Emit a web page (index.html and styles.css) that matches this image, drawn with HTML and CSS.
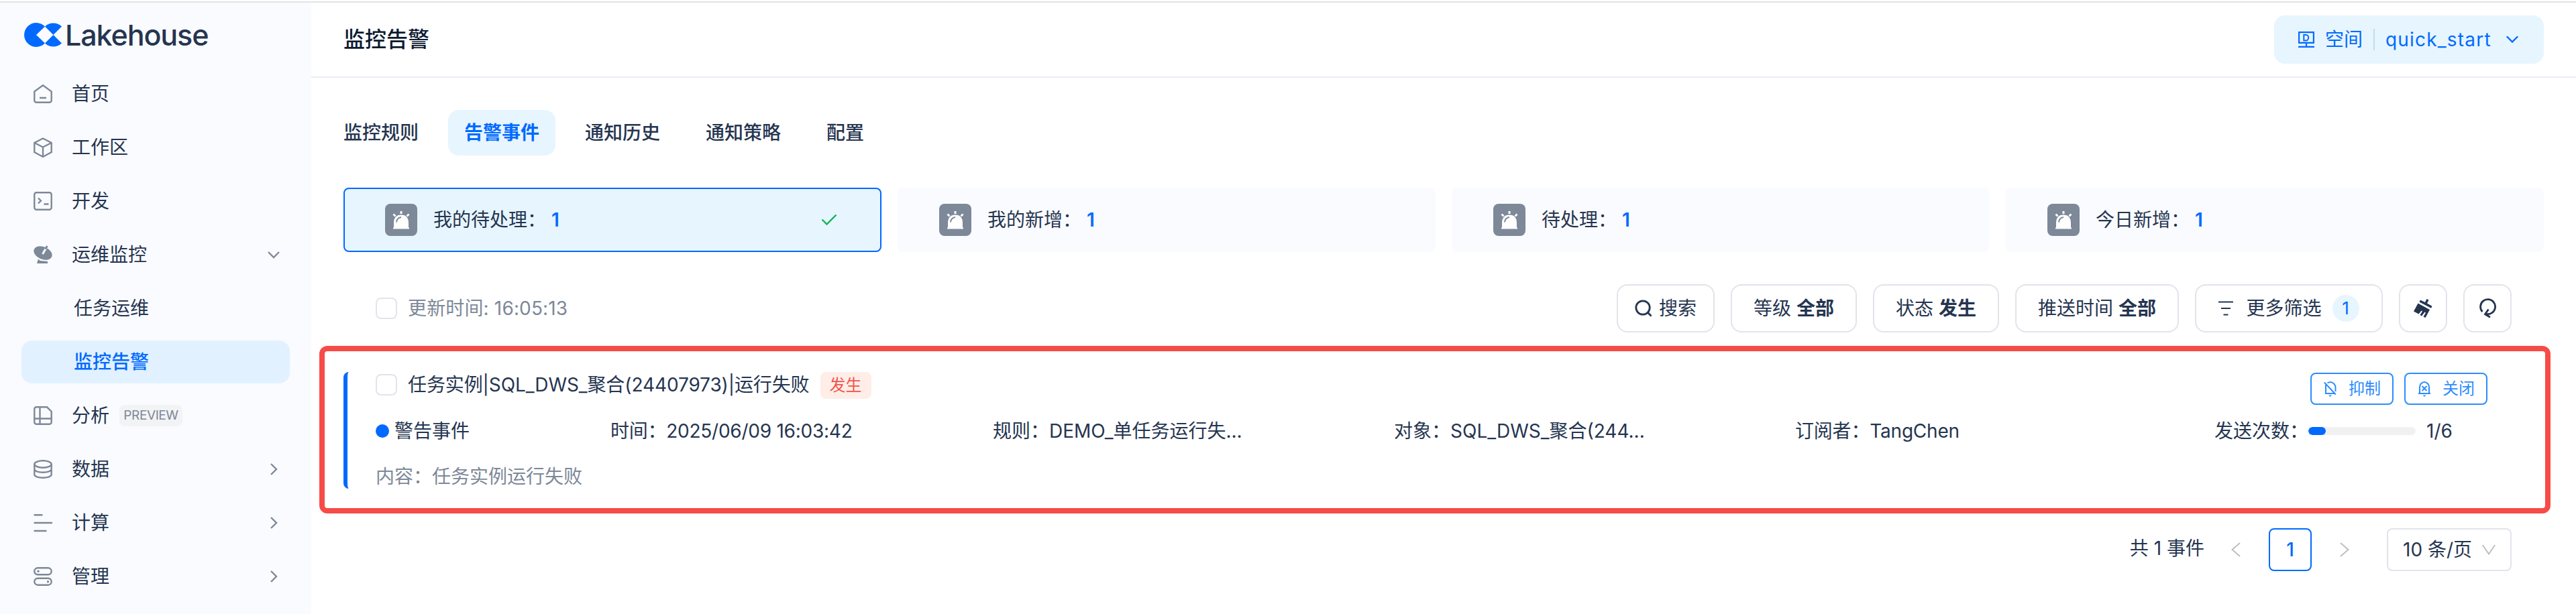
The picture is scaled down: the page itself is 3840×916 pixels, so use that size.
FILE: index.html
```html
<!DOCTYPE html>
<html lang="zh-CN">
<head>
<meta charset="utf-8">
<title>监控告警</title>
<link rel="stylesheet" href="styles.css">
</head>
<body>
<svg class="defs" width="0" height="0">
  <defs>
    <symbol id="siren" viewBox="0 0 48 48">
      <path fill="#fff" d="M13 35.500V29q0-12.500 11-12.500T35 29v6.500h1V38H12v-2.500z"/>
      <path fill="#fff" d="M22.500 11h3v4h-3zM11.500 16.500l2-2 3 3-2 2zM36.500 16.500l-2-2-3 3 2 2z"/>
      <path fill="none" stroke="#7d8898" stroke-width="2" d="M17 27.500q.500-6.500 7-7.500"/>
      <path stroke="#7d8898" stroke-opacity=".5" stroke-width="1" d="M12 37.500h24"/>
    </symbol>
    <symbol id="right" viewBox="0 0 20 20"><path fill="none" stroke="#7d8898" stroke-width="2.400" d="M6 2l8 8-8 8"/></symbol>
  </defs>
</svg>
<div class="app">
  <aside class="sidebar">
    <div class="logo">
      <svg width="56" height="36" viewBox="0 0 56 36" fill="#006aff"><path d="M31 5.500A18 18 0 1 0 31 30.500L18 18z"/><path d="M31 5.500A18 18 0 0 1 56 5.500L43.500 18zM31 30.500A18 18 0 0 0 56 30.500L43.500 18z"/></svg>
      <span class="brand">Lakehouse</span>
    </div>
    <nav class="menu">
      <a class="item"><svg class="mi" viewBox="0 0 28 28"><path d="M1.300 10.500L14 1.300l12.700 9.200V24a2.700 2.700 0 0 1-2.700 2.700H4A2.700 2.700 0 0 1 1.300 24zM9 20h10"/></svg><span>首页</span></a>
      <a class="item"><svg class="mi" viewBox="0 0 28 28"><path d="M14 0.500L26.700 7v14L14 28 1.300 21V7zM1.300 7L14 13.500 26.700 7M14 13.500V28"/></svg><span>工作区</span></a>
      <a class="item"><svg class="mi" viewBox="0 0 28 28"><rect x="1.300" y="1.300" width="25.400" height="25.400" rx="3"/><path d="M7 9.500l4 4-4 4M15.500 18.500h7"/></svg><span>开发</span></a>
      <a class="item"><svg class="mi solid" viewBox="0 0 28 28"><ellipse cx="14" cy="11.500" rx="14.300" ry="9.300" transform="rotate(24 14 11.500)"/><path d="M7 20.500l3 2.500 11 1v3H5z"/><path class="cut" d="M13.500 13L18.500 4.500"/><path class="rod" d="M17.500 5.500L20.500 1"/></svg><span>运维监控</span><svg class="arrow" viewBox="0 0 20 20"><path fill="none" stroke="#7d8898" stroke-width="2.400" d="M2 6l8 8 8-8"/></svg></a>
      <a class="item sub"><span>任务运维</span></a>
      <a class="item sub active"><span>监控告警</span></a>
      <a class="item"><svg class="mi" viewBox="0 0 28 28"><path d="M4 1.300h16l6.700 6.700v16a2.700 2.700 0 0 1-2.700 2.700H4A2.700 2.700 0 0 1 1.300 24V4A2.700 2.700 0 0 1 4 1.300zM9.500 1.300v25.400M1.300 18.500h25.400"/></svg><span>分析</span><em class="preview">PREVIEW</em></a>
      <a class="item"><svg class="mi" viewBox="0 0 28 28"><ellipse cx="14" cy="6.500" rx="12.700" ry="5.200"/><path d="M1.300 6.500V22c0 2.500 5.500 4.700 12.700 4.700S26.700 24.500 26.700 22V6.500M1.300 14c0 2.500 5.500 4.700 12.700 4.700S26.700 16.500 26.700 14"/></svg><span>数据</span><svg class="arrow"><use href="#right"/></svg></a>
      <a class="item"><svg class="mi" viewBox="0 0 28 28"><path stroke-linecap="round" d="M1.500 2.300h11M1.500 14H27M1.500 26h17"/></svg><span>计算</span><svg class="arrow"><use href="#right"/></svg></a>
      <a class="item"><svg class="mi" viewBox="0 0 28 28"><rect x="1.300" y="1.300" width="25.400" height="10" rx="5"/><rect x="1.300" y="16.700" width="25.400" height="10" rx="5"/><circle class="dotfill" cx="7" cy="6.300" r="1.700"/><circle class="dotfill" cx="21.500" cy="21.700" r="1.700"/></svg><span>管理</span><svg class="arrow"><use href="#right"/></svg></a>
    </nav>
  </aside>

  <main class="main">
    <header class="header">
      <h1>监控告警</h1>
      <div class="space">
        <svg width="24" height="24" viewBox="0 0 24 24" fill="none" stroke="#006aff"><path stroke-width="2.200" d="M1.100 1.100h21.800v15.800H1.100zM0 22.800h24M12 17v5"/><path stroke-width="2" d="M8.300 5h3.200a3.500 4 0 0 1 0 8.500H8.300z"/></svg>
        <span class="space-label">空间</span><i class="divider"></i><span class="space-name">quick_start</span>
        <svg class="space-arrow" width="18" height="10" viewBox="0 0 18 10"><path fill="none" stroke="#006aff" stroke-width="2.400" stroke-linecap="round" d="M1.500 1l7.500 7.500L16.500 1"/></svg>
      </div>
    </header>

    <div class="content">
      <nav class="tabs"><a>监控规则</a><a class="on">告警事件</a><a>通知历史</a><a>通知策略</a><a>配置</a></nav>

      <section class="cards">
        <div class="card selected"><svg class="badge-icon"><use href="#siren"/></svg><span>我的待处理：</span><b>1</b><svg class="tick" width="24" height="18" viewBox="0 0 24 18"><path fill="none" stroke="#12b253" stroke-width="2.400" d="M1.500 8.500l7 7L22.500 1.500"/></svg></div>
        <div class="card"><svg class="badge-icon"><use href="#siren"/></svg><span>我的新增：</span><b>1</b></div>
        <div class="card"><svg class="badge-icon"><use href="#siren"/></svg><span>待处理：</span><b>1</b></div>
        <div class="card"><svg class="badge-icon"><use href="#siren"/></svg><span>今日新增：</span><b>1</b></div>
      </section>

      <section class="toolbar">
        <i class="check"></i><span class="updated">更新时间: 16:05:13</span>
        <div class="filters">
          <button class="btn search"><svg width="26" height="26" viewBox="0 0 26 26" fill="none" stroke="#253550" stroke-width="2.800"><circle cx="12" cy="12" r="10.200"/><path d="M19 19l5.500 5.500"/></svg>搜索</button>
          <button class="btn level">等级 <b>全部</b></button>
          <button class="btn level">状态 <b>发生</b></button>
          <button class="btn push">推送时间 <b>全部</b></button>
          <button class="btn more"><svg width="22" height="22" viewBox="0 0 22 22" stroke="#253550" stroke-width="2.200"><path d="M0 1.500h22M4 11h14M7.500 20.500h7"/></svg><span>更多筛选</span><em>1</em></button>
          <button class="btn square"><svg width="28" height="30" viewBox="0 0 28 30"><path fill="#253550" d="M19.500 1l3 1.500-2.500 5 7.500 4.300-1.500 3L8.500 5.500l1.500-3 7 3.500z"/><path fill="#253550" d="M6.500 7.500L24 17l-6.500 12-3-1.500 3.500-6-1.500-1-4.500 6-2.500-1.500 3.500-5.500-1.500-1-4 5L0 19.500z"/></svg></button>
          <button class="btn square"><svg width="26" height="30" viewBox="0 0 26 30" fill="none" stroke="#253550" stroke-width="2.800"><path d="M5.500 20A11 11 0 1 1 20 21.500Q16 24.500 10 23.500"/><path d="M14.500 16.500L9.500 23.800l7.500 4.400"/></svg></button>
        </div>
      </section>

      <section class="highlight">
        <article class="event">
          <div class="event-head">
            <i class="check"></i><span class="event-title">任务实例|SQL_DWS_聚合(24407973)|运行失败</span><em class="tag">发生</em>
            <div class="actions">
              <button class="act"><svg width="20" height="24" viewBox="0 0 20 24" fill="none" stroke="#2e8cff" stroke-width="2"><path d="M3 6v13h13M5.500 3.500Q10 .500 14 3.500 17.500 6 17.500 10v6M.800 2.500l17 18"/><path fill="#2e8cff" stroke="none" d="M7 21.500h5L9.500 24z"/></svg>抑制</button>
              <button class="act"><svg width="20" height="24" viewBox="0 0 20 24" fill="none" stroke="#2e8cff" stroke-width="2"><path d="M3 19V9.500a7 7.500 0 0 1 14 0V19M1 19h18M6.500 8l7 7M13.500 8l-7 7"/><path fill="#2e8cff" stroke="none" d="M7.500 21.500h5L10 24z"/></svg>关闭</button>
            </div>
          </div>
          <div class="event-info">
            <span class="kind"><i class="dot"></i>警告事件</span>
            <span class="time">时间：2025/06/09 16:03:42</span>
            <span>规则：DEMO_单任务运行失...</span>
            <span>对象：SQL_DWS_聚合(244...</span>
            <span class="subscriber">订阅者：TangChen</span>
            <span class="sent">发送次数：<i class="progress"><i class="bar"></i></i>1/6</span>
          </div>
          <div class="event-body">内容：任务实例运行失败</div>
        </article>
      </section>

      <footer class="pager">
        <span class="total">共 1 事件</span>
        <svg class="prev" width="14" height="22" viewBox="0 0 14 22"><path fill="none" stroke="#bfbfbf" stroke-width="2" d="M13 1L1.500 11 13 21"/></svg>
        <span class="page">1</span>
        <svg class="next" width="14" height="22" viewBox="0 0 14 22"><path fill="none" stroke="#bfbfbf" stroke-width="2" d="M1 1l11.500 10L1 21"/></svg>
        <span class="size">10 条/页<svg width="20" height="16" viewBox="0 0 20 16"><path fill="none" stroke="#bfbfbf" stroke-width="2" d="M.800 1L10 14.500 19.200 1"/></svg></span>
      </footer>
    </div>
  </main>
</div>
</body>
</html>
```
FILE: styles.css
```css
* { box-sizing: border-box; }
body {
  margin: 0;
  background: #fff;
  color: #253550;
  font-family: Inter, "Noto Sans CJK SC", sans-serif;
  font-size: 28px;
  line-height: 40px;
}
i, em { font-style: normal; }
svg { flex: none; display: block; }
.defs { position: absolute; }
.app {
  display: flex;
  height: 916px;
  padding-top: 4px;
  background: linear-gradient(#fff 2px, #e2e3e2 2px, #e2e3e2 4px, #fff 4px);
  white-space: nowrap;
  overflow: hidden;
}

/* Sidebar */
.sidebar { flex: none; width: 464px; background: #fafbff; }
.logo { display: flex; align-items: flex-start; gap: 5px; height: 104px; padding: 30px 0 0 36px; }
.brand { font-size: 43px; font-weight: 500; line-height: 36px; letter-spacing: -1.1px; }
.menu { display: flex; flex-direction: column; gap: 16px; padding: 0 32px; }
.item { display: flex; align-items: center; height: 64px; padding: 0 14px 0 18px; border-radius: 16px; }
.mi { width: 28px; height: 28px; margin-right: 29px; fill: none; stroke: #7d8898; stroke-width: 2.400; overflow: visible; }
.mi.solid { fill: #7d8898; stroke: none; }
.mi .cut { fill: none; stroke: #fafbff; stroke-width: 3; }
.mi .rod { fill: none; stroke: #7d8898; stroke-width: 3; }
.mi .dotfill { fill: #7d8898; stroke: none; }
.item.sub { padding-left: 78px; }
.item.active { background: #e1f1ff; color: #006aff; font-weight: 500; }
.arrow { width: 20px; height: 20px; margin-left: auto; }
.preview { width: 94px; margin-left: 15px; height: 32px; border-radius: 8px; background: #f2f3f5; color: #7d8898; font-size: 19px; line-height: 32px; text-align: center; letter-spacing: -0.4px; }

/* Header */
.main { flex: 1; min-width: 0; }
.header { display: flex; align-items: center; justify-content: space-between; height: 112px; padding: 0 48px; border-bottom: 2px solid #e9eef4; }
.header h1 { margin: 0; color: #0c1a30; font-size: 32px; font-weight: 500; }
.space { display: flex; align-items: center; width: 402px; height: 72px; padding-left: 36px; border-radius: 16px; background: #e7f5ff; color: #006aff; }
.space-label { margin-left: 16px; }
.divider { width: 2px; height: 32px; margin: 0 16px; background: #c3dcea; }
.space-name { width: 163px; letter-spacing: 1.2px; }
.space-arrow { margin-left: 17px; }

/* Tabs and counters */
.content { padding: 48px 48px 0; }
.tabs { display: flex; gap: 20px; height: 68px; font-weight: 500; }
.tabs a { padding: 0 24px; border-radius: 16px; line-height: 68px; }
.tabs a:first-child { padding-left: 0; }
.tabs .on { background: #e7f5ff; color: #006aff; font-weight: 700; }
.cards { display: grid; grid-template-columns: repeat(4, 1fr); gap: 24px; margin-top: 48px; }
.card { display: flex; align-items: center; height: 96px; padding: 0 64px 0 60px; border: 2px solid #fafbff; border-radius: 8px; background: #fafbff; }
.card.selected { border-color: #006aff; background: #e7f5ff; }
.badge-icon { width: 48px; height: 48px; margin-right: 24px; border-radius: 8px; background: #7d8898; }
.card b { margin-left: 8px; color: #006aff; font-weight: 600; }
.tick { margin-left: auto; }

/* Toolbar */
.toolbar { display: flex; align-items: center; height: 72px; margin-top: 48px; padding: 0 48px; color: #7d8898; }
.updated { letter-spacing: 0.15px; }
.check { flex: none; width: 32px; height: 32px; margin-right: 16px; border: 2px solid #e1e4ea; border-radius: 8px; background: #fff; }
.filters { display: flex; gap: 24px; margin-left: auto; }
.btn { display: flex; align-items: center; justify-content: center; height: 72px; padding: 0; border: 2px solid #e1e4ea; border-radius: 16px; background: #fff; color: #253550; font: inherit; white-space: pre; }
.btn b { font-weight: 700; }
.search { width: 146px; gap: 10px; }
.level { width: 188px; }
.push { width: 244px; }
.more { width: 280px; }
.more span { margin: 0 16px 0 19px; }
.more em { width: 40px; height: 40px; border-radius: 50%; background: #e7f5ff; color: #006aff; font-size: 26px; text-align: center; }
.square { width: 72px; }

/* Event list */
.highlight { height: 250px; margin: 20px -10px 0 -36px; padding: 31px 50px 0 28px; border: 8px solid #f74b47; border-radius: 12px; }
.event { height: 174px; padding: 0 36px 0 42px; border-left: 6px solid #006aff; border-radius: 8px 0 0 8px; }
.event-head { display: flex; align-items: center; height: 38px; }
.event-title { letter-spacing: -0.1px; }
.tag { width: 76px; height: 40px; margin: 2px 0 0 16px; border-radius: 8px; background: #ffede8; color: #f25449; font-size: 24px; text-align: center; }
.actions { display: flex; gap: 16px; margin: 12px 0 0 auto; }
.act { display: flex; align-items: center; gap: 17px; width: 124px; height: 48px; padding: 0 0 0 18px; border: 2px solid #2e8cff; border-radius: 8px; background: #fff; color: #2e8cff; font: inherit; font-size: 24px; }
.event-info { display: grid; grid-template-columns: 350px 570px 598px 598px 625px 1fr; align-items: center; height: 40px; margin-top: 30px; }
.kind, .sent { display: flex; align-items: center; }
.time { letter-spacing: -0.25px; }
.subscriber { letter-spacing: -0.2px; }
.dot { width: 20px; height: 20px; margin-right: 8px; border-radius: 50%; background: #006aff; }
.progress { width: 160px; height: 12px; margin-right: 16px; border-radius: 6px; background: #f1f1f1; overflow: hidden; }
.bar { display: block; width: 26px; height: 12px; border-radius: 6px; background: #006aff; }
.event-body { margin-top: 28px; color: #7d8898; }

/* Pagination */
.pager { display: flex; align-items: center; justify-content: flex-end; height: 64px; margin-top: 22px; padding-right: 48px; }
.total { margin: -4px 40px 0 0; }
.page { width: 64px; height: 64px; margin: 0 42px; border: 2px solid #006aff; border-radius: 8px; color: #006aff; font-weight: 500; line-height: 60px; text-align: center; }
.size { display: flex; align-items: center; justify-content: space-between; width: 186px; height: 64px; margin-left: 56px; padding: 0 22px; border: 2px solid #e1e4ea; border-radius: 8px; }
```
